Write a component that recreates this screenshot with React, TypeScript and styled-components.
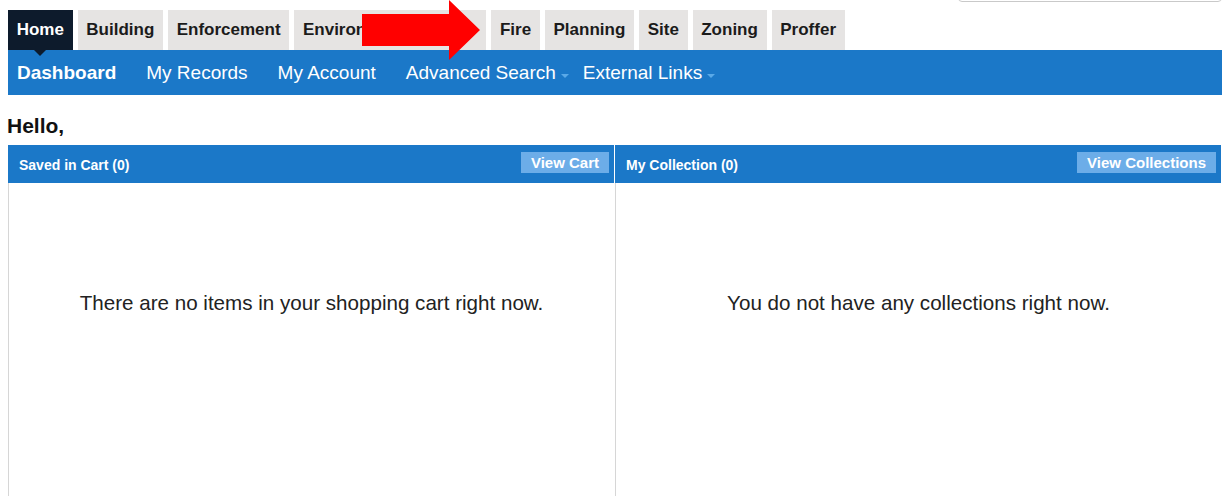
import React from "react";
import styled, { createGlobalStyle } from "styled-components";

const GlobalStyle = createGlobalStyle`
  html, body {
    margin: 0;
    padding: 0;
    background: #ffffff;
    font-family: "Liberation Sans", Arial, sans-serif;
  }
`;

const Page = styled.div`
  position: relative;
  width: 1222px;
  height: 496px;
  overflow: hidden;
  padding-left: 8px;
  box-sizing: border-box;
`;

const TopBar = styled.div`
  display: flex;
  justify-content: flex-end;
  height: 10px;
`;

const SearchBox = styled.input`
  width: 264px;
  height: 30px;
  margin-top: -28px;
  box-sizing: border-box;
  border: 1px solid #c9c9c9;
  border-radius: 4px;
  background: #fff;
`;

const Tabs = styled.div`
  display: flex;
  gap: 5px;
  height: 40px;
`;

const Tab = styled.div<{ $active?: boolean; $width?: number }>`
  position: relative;
  display: flex;
  align-items: center;
  padding: 0 8.7px;
  width: ${(p) => (p.$width ? `${p.$width}px` : "auto")};
  box-sizing: border-box;
  overflow: hidden;
  white-space: nowrap;
  font-size: 17px;
  font-weight: 700;
  background: ${(p) => (p.$active ? "#0d1b2c" : "#e6e4e3")};
  color: ${(p) => (p.$active ? "#ffffff" : "#1b1b1b")};
  ${(p) =>
    p.$active &&
    `
    overflow: visible;
    &::after {
      content: "";
      position: absolute;
      left: 50%;
      bottom: -6px;
      margin-left: -6px;
      border-left: 6px solid transparent;
      border-right: 6px solid transparent;
      border-top: 6px solid #0d1b2c;
    }
  `}
`;

const NavBar = styled.div`
  display: flex;
  align-items: center;
  height: 45px;
  background: #1b78c8;
  padding-left: 9px;
`;

const NavItem = styled.div<{ $current?: boolean; $menu?: boolean }>`
  display: flex;
  align-items: center;
  margin-right: ${(p) => (p.$menu ? 14 : 30)}px;
  font-size: 19px;
  font-weight: ${(p) => (p.$current ? 700 : 400)};
  color: #ffffff;
  white-space: nowrap;
`;

const Caret = styled.span`
  display: inline-block;
  margin: 7px 0 0 5px;
  border-left: 4.5px solid transparent;
  border-right: 4.5px solid transparent;
  border-top: 4.5px solid #5aa9e8;
`;

const Greeting = styled.h1`
  margin: 19px 0 7px -1px;
  font-size: 21px;
  line-height: 24px;
  font-weight: 700;
  color: #111111;
`;

const Panels = styled.div`
  display: grid;
  grid-template-columns: 606px 606px;
  gap: 1px;
`;

const Panel = styled.section`
  display: flex;
  flex-direction: column;
`;

const PanelHeader = styled.div`
  display: flex;
  justify-content: space-between;
  align-items: flex-start;
  height: 38px;
  box-sizing: border-box;
  padding: 7px 5px 0 11px;
  background: #1b78c8;
`;

const PanelTitle = styled.h2`
  margin: 0;
  padding-top: 4px;
  font-size: 14px;
  line-height: 18px;
  font-weight: 700;
  color: #ffffff;
`;

const HeaderButton = styled.button`
  height: 21px;
  padding: 0 10px;
  border: 0;
  background: #6cade8;
  color: #ffffff;
  font-family: inherit;
  font-size: 15px;
  font-weight: 700;
  line-height: 21px;
  cursor: pointer;
`;

const PanelBody = styled.div`
  height: 320px;
  padding-top: 108px;
  box-sizing: border-box;
  border-left: 1px solid #d6d6d6;
  text-align: center;
  font-size: 20.6px;
  line-height: 24px;
  color: #222222;
`;

const Arrow = styled.svg`
  position: absolute;
  left: 362px;
  top: 0;
`;

const TABS = [
  { label: "Home", active: true },
  { label: "Building" },
  { label: "Enforcement" },
  { label: "Environmental", width: 192 },
  { label: "Fire" },
  { label: "Planning" },
  { label: "Site" },
  { label: "Zoning" },
  { label: "Proffer" },
];

const NAV = [
  { label: "Dashboard", current: true },
  { label: "My Records" },
  { label: "My Account" },
  { label: "Advanced Search", menu: true },
  { label: "External Links", menu: true },
];

function App() {
  return (
    <Page>
      <GlobalStyle />
      <TopBar>
        <SearchBox aria-label="Search" />
      </TopBar>
      <Tabs>
        {TABS.map((t) => (
          <Tab key={t.label} $active={t.active} $width={t.width}>
            {t.label}
          </Tab>
        ))}
      </Tabs>
      <NavBar>
        {NAV.map((n) => (
          <NavItem key={n.label} $current={n.current} $menu={n.menu}>
            {n.label}
            {n.menu && <Caret />}
          </NavItem>
        ))}
      </NavBar>
      <Greeting>Hello,</Greeting>
      <Panels>
        <Panel>
          <PanelHeader>
            <PanelTitle>Saved in Cart (0)</PanelTitle>
            <HeaderButton>View Cart</HeaderButton>
          </PanelHeader>
          <PanelBody>There are no items in your shopping cart right now.</PanelBody>
        </Panel>
        <Panel>
          <PanelHeader>
            <PanelTitle>My Collection (0)</PanelTitle>
            <HeaderButton>View Collections</HeaderButton>
          </PanelHeader>
          <PanelBody>You do not have any collections right now.</PanelBody>
        </Panel>
      </Panels>
      <Arrow width="120" height="62" viewBox="0 0 120 62">
        <polygon points="0,14 87,14 87,0 118,30 87,60 87,46 0,46" fill="#ff0000" />
      </Arrow>
    </Page>
  );
}

export default App;
